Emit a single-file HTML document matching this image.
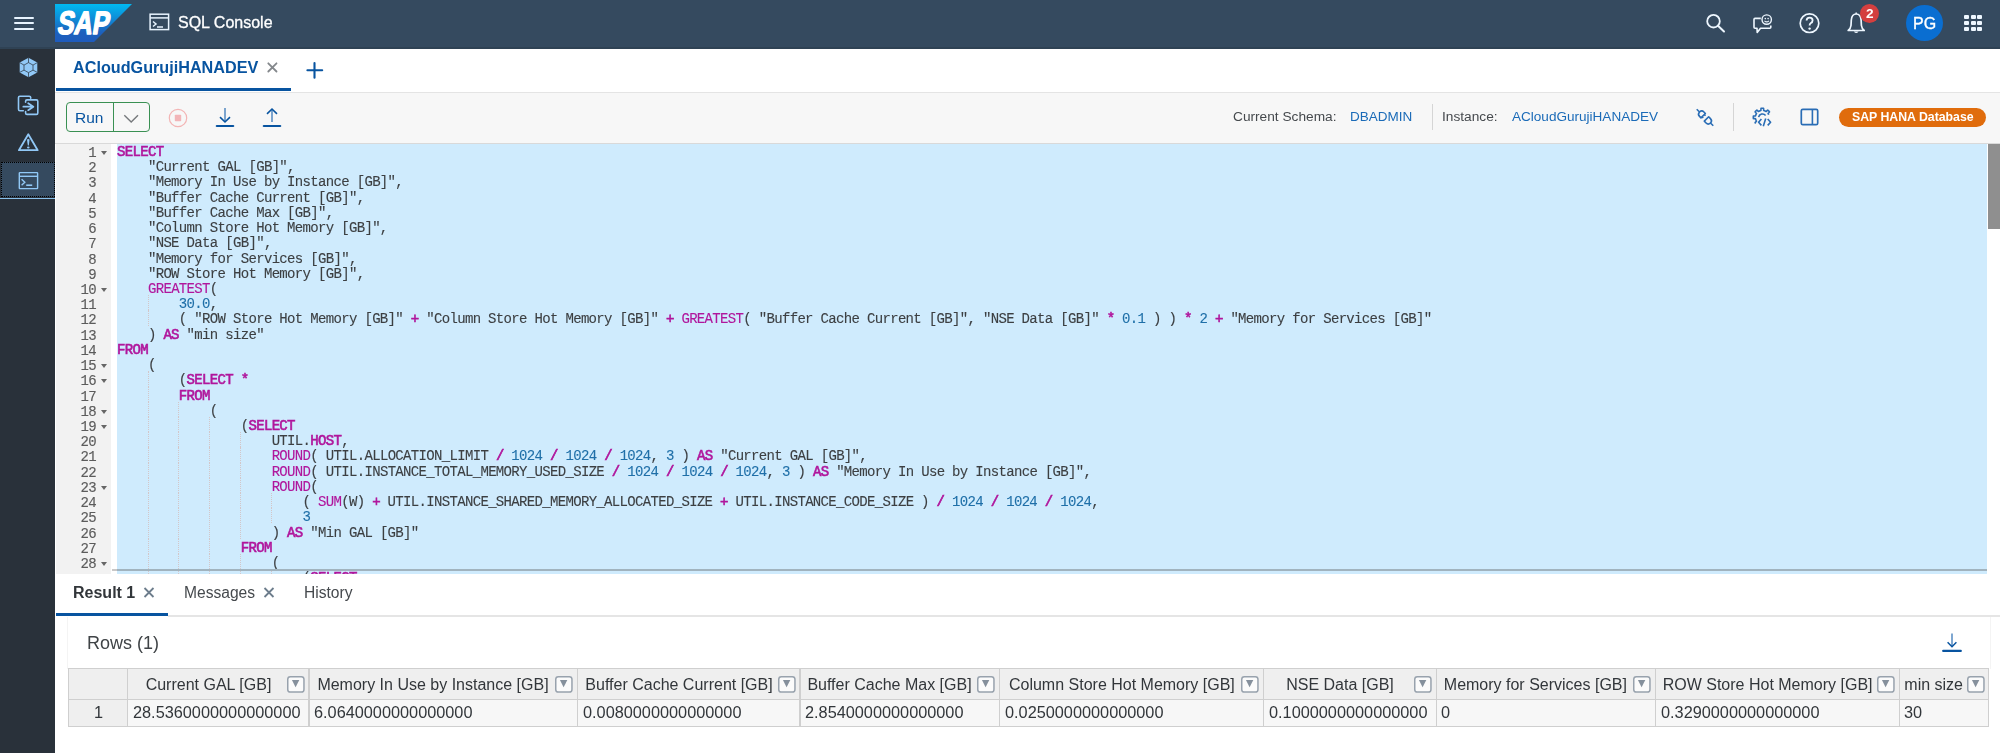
<!DOCTYPE html>
<html><head><meta charset="utf-8"><style>
*{box-sizing:border-box;margin:0;padding:0}
html,body{width:2000px;height:753px;overflow:hidden;background:#fff;font-family:"Liberation Sans",sans-serif;position:relative}
.a{position:absolute}
.t{white-space:pre;will-change:transform}
#code{left:117px;top:144.8px;width:1870px;height:428.7px;overflow:hidden;font-family:"Liberation Mono",monospace;font-size:14px;letter-spacing:-0.67px;color:#3c3f42;white-space:pre;-webkit-text-stroke:0.12px currentColor;will-change:transform}
.cl{position:absolute;left:0;height:15.22px;line-height:15.22px}
#lnum{left:56px;top:145.8px;width:55px;height:426.7px;overflow:hidden;font-family:"Liberation Mono",monospace;font-size:14px;letter-spacing:-0.65px;color:#5c5c5c;-webkit-text-stroke:0.15px currentColor;will-change:transform}
.ln{position:absolute;right:15px;height:15.22px;line-height:15.22px}
.fd{position:absolute;left:45px;width:0;height:0;border-left:3.2px solid transparent;border-right:3.2px solid transparent;border-top:4px solid #666}
.k{color:#b0169c;font-weight:normal;-webkit-text-stroke:0.6px currentColor}
.f{color:#b0169c;font-style:normal}
.n{color:#1f6fa8;font-style:normal}
.ig{position:absolute;width:0;height:15.22px;border-left:1px dotted #d3c6c8}
.fi{width:17.7px;height:16.8px;border:1.5px solid #98a2ad;border-radius:3px;background:#fbfbfb}
.fi:after{content:"";position:absolute;left:3.4px;top:2.8px;border-left:3.8px solid transparent;border-right:3.8px solid transparent;border-top:7px solid #85909c}
.hd{font-size:16px;line-height:16px;color:#32363a;text-align:center;overflow:hidden}
</style></head><body>
<div class="a" style="left:0;top:0;width:2000px;height:49px;background:#354a5f"></div>
<div class="a" style="left:0;top:47px;width:2000px;height:2px;background:#2f4254"></div>
<div class="a" style="left:13.5px;top:16.5px;width:20px;height:2px;background:#e8f4ff;border-radius:1px"></div>
<div class="a" style="left:13.5px;top:22.2px;width:20px;height:2px;background:#e8f4ff;border-radius:1px"></div>
<div class="a" style="left:13.5px;top:27.9px;width:20px;height:2px;background:#e8f4ff;border-radius:1px"></div>
<svg class="a" style="left:55px;top:4px" width="77" height="38" viewBox="0 0 77 38">
<defs><linearGradient id="sg" x1="0" y1="0" x2="0" y2="1"><stop offset="0" stop-color="#00b9f2"/><stop offset="0.75" stop-color="#1d61bd"/><stop offset="1" stop-color="#1e5bbd"/></linearGradient></defs>
<polygon points="0,0 77,0 39,38 0,38" fill="url(#sg)"/>
<text x="6.2" y="30.2" font-family="Liberation Sans" font-weight="bold" font-size="32.5" fill="#fff" stroke="#fff" stroke-width="1.5" stroke-linejoin="round" textLength="52" lengthAdjust="spacingAndGlyphs" transform="skewX(-9)">SAP</text>
</svg>
<svg class="a" style="left:149px;top:13px" width="21" height="18" viewBox="0 0 21 18">
<rect x="1.1" y="1.2" width="18.5" height="15.4" fill="none" stroke="#e8f4ff" stroke-width="1.5"/>
<line x1="1.1" y1="4.9" x2="19.6" y2="4.9" stroke="#e8f4ff" stroke-width="1.5"/>
<polyline points="4,8.5 7,11 4,13.5" fill="none" stroke="#e8f4ff" stroke-width="1.5"/>
<line x1="8" y1="14" x2="14" y2="14" stroke="#e8f4ff" stroke-width="1.5"/>
</svg>
<div class="a t" style="left:178.00px;top:14.85px;font-size:16px;line-height:16px;color:#ffffff;font-weight:400;-webkit-text-stroke:0.3px #fff">SQL Console</div>
<svg class="a" style="left:1703px;top:11px" width="26" height="24" viewBox="0 0 26 24">
<circle cx="10.5" cy="10.2" r="6.3" fill="none" stroke="#eef7ff" stroke-width="1.8"/>
<line x1="15" y1="14.8" x2="21" y2="20.5" stroke="#eef7ff" stroke-width="2" stroke-linecap="round"/>
</svg>
<svg class="a" style="left:1751px;top:12px" width="26" height="24" viewBox="0 0 26 24">
<path d="M9.8 6.4 H4 Q3 6.4 3 7.4 V15.3 Q3 16.3 4 16.3 H6 L6.2 20.5 L9.5 16.3 H18.8 Q19.8 16.3 19.8 15.3 V13.4" fill="none" stroke="#eef7ff" stroke-width="1.6" stroke-linejoin="round"/>
<circle cx="15.7" cy="7.6" r="4.7" fill="none" stroke="#eef7ff" stroke-width="1.4"/>
<path d="M13.5 8.8 Q15.7 11 17.9 8.8" fill="none" stroke="#eef7ff" stroke-width="1.1"/>
<circle cx="14.3" cy="6.6" r="0.8" fill="#eef7ff"/><circle cx="17.1" cy="6.6" r="0.8" fill="#eef7ff"/>
</svg>
<svg class="a" style="left:1798px;top:12px" width="24" height="24" viewBox="0 0 24 24">
<circle cx="11.5" cy="11.2" r="9.3" fill="none" stroke="#eef7ff" stroke-width="1.7"/>
<path d="M8.6 8.6 Q8.6 5.6 11.6 5.6 Q14.6 5.6 14.6 8.4 Q14.6 10.2 12.6 11.2 Q11.6 11.8 11.6 13.4" fill="none" stroke="#eef7ff" stroke-width="1.8"/>
<circle cx="11.6" cy="16.6" r="1.2" fill="#eef7ff"/>
</svg>
<svg class="a" style="left:1845px;top:11px" width="24" height="25" viewBox="0 0 24 25">
<path d="M11.2 3 Q6.8 3 6.3 9 L6 14.5 Q5.6 17.6 3.2 19.5 H19.2 Q16.8 17.6 16.4 14.5 L16.1 9 Q15.6 3 11.2 3 Z" fill="none" stroke="#eef7ff" stroke-width="1.7" stroke-linejoin="round"/>
<path d="M8.8 20.5 Q11.2 23.5 13.6 20.5 Z" fill="#eef7ff"/>
<line x1="11.2" y1="1.5" x2="11.2" y2="3" stroke="#eef7ff" stroke-width="1.5"/>
</svg>
<div class="a" style="left:1860px;top:3.5px;width:19px;height:19px;border-radius:50%;background:#d43f3f"></div>
<div class="a t" style="left:1865.80px;top:6.68px;font-size:13.6px;line-height:13.6px;color:#ffffff;font-weight:700;">2</div>
<div class="a" style="left:1906px;top:4.5px;width:37px;height:36px;border-radius:50%;background:#0a6ed1"></div>
<div class="a t" style="left:1913.30px;top:15.65px;font-size:16px;line-height:16px;color:#ffffff;font-weight:400;-webkit-text-stroke:0.35px #fff">PG</div>
<div class="a" style="left:1964.4px;top:14.8px;width:5px;height:4.3px;border-radius:1px;background:#eef7ff"></div>
<div class="a" style="left:1970.6px;top:14.8px;width:5px;height:4.3px;border-radius:1px;background:#eef7ff"></div>
<div class="a" style="left:1976.8px;top:14.8px;width:5px;height:4.3px;border-radius:1px;background:#eef7ff"></div>
<div class="a" style="left:1964.4px;top:20.8px;width:5px;height:4.3px;border-radius:1px;background:#eef7ff"></div>
<div class="a" style="left:1970.6px;top:20.8px;width:5px;height:4.3px;border-radius:1px;background:#eef7ff"></div>
<div class="a" style="left:1976.8px;top:20.8px;width:5px;height:4.3px;border-radius:1px;background:#eef7ff"></div>
<div class="a" style="left:1964.4px;top:26.8px;width:5px;height:4.3px;border-radius:1px;background:#eef7ff"></div>
<div class="a" style="left:1970.6px;top:26.8px;width:5px;height:4.3px;border-radius:1px;background:#eef7ff"></div>
<div class="a" style="left:1976.8px;top:26.8px;width:5px;height:4.3px;border-radius:1px;background:#eef7ff"></div>
<div class="a" style="left:0;top:49px;width:55px;height:704px;background:#29313a"></div>
<svg class="a" style="left:18px;top:57px" width="21" height="21" viewBox="0 0 21 21">
<polygon points="10.5,0.8 19.3,5.6 19.3,15.4 10.5,20.2 1.7,15.4 1.7,5.6" fill="#91c8f6"/>
<polygon points="10.5,5.6 15,8.1 15,13.1 10.5,15.6 6,13.1 6,8.1" fill="none" stroke="#29313a" stroke-width="0.9" opacity="0.8"/>
<path d="M10.5 0.8 V5.6 M1.7 5.6 L6 8.1 M19.3 5.6 L15 8.1 M1.7 15.4 L6 13.1 M19.3 15.4 L15 13.1 M10.5 15.6 V20.2" fill="none" stroke="#29313a" stroke-width="0.9" opacity="0.8"/>
</svg>
<svg class="a" style="left:17px;top:95px" width="23" height="21" viewBox="0 0 23 21">
<path d="M13.7 3.3 V2.5 Q13.7 1.2 12.2 1.2 H2.9 Q1.5 1.2 1.5 2.5 V14.2 Q1.5 15.7 2.9 15.7 H6.3" fill="none" stroke="#91c8f6" stroke-width="1.6" stroke-linecap="round"/>
<path d="M8.6 7.3 V6.3 Q8.6 4.9 10 4.9 H19.4 Q20.8 4.9 20.8 6.3 V18 Q20.8 19.4 19.4 19.4 H10 Q8.6 19.4 8.6 18 V16.6" fill="none" stroke="#91c8f6" stroke-width="1.6" stroke-linecap="round"/>
<path d="M6.3 11.7 H16.2 M11.2 8.2 L16.4 11.7 L11.2 15.2" fill="none" stroke="#91c8f6" stroke-width="1.7" stroke-linecap="round" stroke-linejoin="round"/>
</svg>
<svg class="a" style="left:17px;top:132px" width="23" height="20" viewBox="0 0 23 20">
<path d="M11.3 2.2 L20.7 18.2 H1.9 Z" fill="none" stroke="#91c8f6" stroke-width="1.8" stroke-linejoin="round"/>
<path d="M10 7.6 Q11.3 6.2 12.6 7.6 L11.8 13.6 H10.8 Z" fill="#91c8f6"/>
<ellipse cx="11.3" cy="15.6" rx="1.3" ry="1" fill="#91c8f6"/>
</svg>
<div class="a" style="left:1px;top:162px;width:54px;height:35px;background:#354a5f;border:1px dotted #000"></div>
<div class="a" style="left:0;top:197.5px;width:55px;height:1.6px;background:#88c0ea"></div>
<svg class="a" style="left:18px;top:171px" width="21" height="19" viewBox="0 0 21 19">
<rect x="1.3" y="1.6" width="18.3" height="16" rx="0.6" fill="none" stroke="#91c8f6" stroke-width="1.4"/>
<line x1="1.3" y1="5.3" x2="19.6" y2="5.3" stroke="#91c8f6" stroke-width="1.4"/>
<polyline points="3.6,8.3 6.8,11.2 3.6,14.2" fill="none" stroke="#91c8f6" stroke-width="1.4"/>
<line x1="8.2" y1="14.2" x2="14.2" y2="14.2" stroke="#91c8f6" stroke-width="1.6"/>
</svg>
<div class="a" style="left:55px;top:49px;width:1945px;height:43px;background:#fff"></div>
<div class="a" style="left:55px;top:91.5px;width:1945px;height:1.5px;background:#e4e4e4"></div>
<div class="a t" style="left:72.50px;top:58.98px;font-size:16.2px;line-height:16.2px;color:#0854a0;font-weight:700;">ACloudGurujiHANADEV</div>
<svg class="a" style="left:266px;top:61px" width="12" height="12" viewBox="0 0 12 12"><path d="M2.3 2.3 L10.5 10.5 M10.5 2.3 L2.3 10.5" stroke="#84888c" stroke-width="1.8" stroke-linecap="round"/></svg>
<div class="a" style="left:56px;top:88.3px;width:235px;height:3.2px;background:#0854a0"></div>
<svg class="a" style="left:305px;top:60.5px" width="19" height="19" viewBox="0 0 19 19"><path d="M9.5 2 V16.8 M2.4 9.3 H17.2" stroke="#0854a0" stroke-width="2.1" stroke-linecap="round"/></svg>
<div class="a" style="left:55px;top:93px;width:1945px;height:50.5px;background:#f7f7f7"></div>
<div class="a" style="left:55px;top:142.5px;width:1945px;height:1.5px;background:#d9d9d9"></div>
<div class="a" style="left:66px;top:102px;width:84px;height:30px;border:1.4px solid #3a9053;border-radius:4px"></div>
<div class="a" style="left:112.5px;top:102px;width:1.4px;height:30px;background:#3a9053"></div>
<div class="a t" style="left:75.00px;top:110.48px;font-size:15.5px;line-height:15.5px;color:#0854a0;font-weight:400;">Run</div>
<svg class="a" style="left:123px;top:113.6px" width="16" height="10" viewBox="0 0 16 10"><polyline points="1.3,1.2 8.2,8 15,1.2" fill="none" stroke="#76797c" stroke-width="1.4"/></svg>
<svg class="a" style="left:168px;top:107.5px" width="20" height="20" viewBox="0 0 20 20"><circle cx="10" cy="10" r="8.7" fill="none" stroke="#f3b5b5" stroke-width="1.2"/><rect x="6.8" y="6.8" width="6.4" height="6.4" rx="0.8" fill="#f2b5b8"/></svg>
<svg class="a" style="left:215px;top:107px" width="20" height="21" viewBox="0 0 20 21"><path d="M10 1 V14.5" fill="none" stroke="#3a78b8" stroke-width="1.3"/><path d="M5 10.2 L10 15 L15 10.2" fill="none" stroke="#0854a0" stroke-width="1.6"/><line x1="1.8" y1="19" x2="18.2" y2="19" stroke="#0854a0" stroke-width="2.2" stroke-linecap="round"/></svg>
<svg class="a" style="left:262px;top:107px" width="20" height="21" viewBox="0 0 20 21"><path d="M10 15 V2" fill="none" stroke="#3a78b8" stroke-width="1.3"/><path d="M5 6.8 L10 2 L15 6.8" fill="none" stroke="#0854a0" stroke-width="1.6"/><line x1="1.8" y1="19" x2="18.2" y2="19" stroke="#0854a0" stroke-width="2.2" stroke-linecap="round"/></svg>
<div class="a t" style="left:1232.50px;top:109.90px;font-size:13.7px;line-height:13.7px;color:#45494d;font-weight:400;">Current Schema:</div>
<div class="a t" style="left:1350.00px;top:110.07px;font-size:13.5px;line-height:13.5px;color:#1b6bb8;font-weight:400;">DBADMIN</div>
<div class="a" style="left:1431.5px;top:104px;width:1px;height:26px;background:#d5d5d5"></div>
<div class="a t" style="left:1442.00px;top:109.90px;font-size:13.7px;line-height:13.7px;color:#45494d;font-weight:400;">Instance:</div>
<div class="a t" style="left:1511.50px;top:110.03px;font-size:13.55px;line-height:13.55px;color:#1b6bb8;font-weight:400;">ACloudGurujiHANADEV</div>
<svg class="a" style="left:1690px;top:103px" width="40" height="30" viewBox="1690 103 40 30">
<g transform="rotate(-45 1705 117.5)" fill="none" stroke="#2a6db5" stroke-width="1.6" stroke-linejoin="round">
<path d="M1705 105.8 V109.8"/>
<path d="M1701.9 114.9 V112.9 Q1701.9 109.8 1705 109.8 Q1708.1 109.8 1708.1 112.9 V114.9 Z"/>
<path d="M1703.4 114.9 V116.6 M1706.6 114.9 V116.6"/>
<path d="M1701.9 119.6 H1708.1 V122.1 Q1708.1 125.2 1705 125.2 Q1701.9 125.2 1701.9 122.1 Z"/>
<path d="M1705 125.2 V129.2"/>
</g></svg>
<div class="a" style="left:1733px;top:103px;width:1.2px;height:28px;background:#d5d5d5"></div>
<svg class="a" style="left:1745px;top:103px" width="40" height="30" viewBox="1745 103 40 30">
<g fill="none" stroke="#2a6db5" stroke-width="1.6" stroke-linejoin="round">
<path d="M1755.72 123.44 L1755.61 123.32 L1755.51 123.20 L1755.41 123.09 L1755.31 122.96 L1755.21 122.84 L1755.11 122.72 L1755.30 122.38 L1755.85 121.82 L1756.42 121.27 L1756.51 121.06 L1756.45 120.96 L1756.39 120.85 L1756.32 120.75 L1756.27 120.65 L1756.21 120.54 L1756.15 120.43 L1756.10 120.32 L1756.05 120.22 L1756.00 120.11 L1755.95 120.00 L1755.90 119.88 L1755.86 119.77 L1755.82 119.66 L1755.78 119.55 L1755.74 119.43 L1755.70 119.32 L1755.67 119.20 L1755.64 119.09 L1755.60 118.97 L1755.58 118.85 L1755.55 118.73 L1755.34 118.65 L1754.55 118.67 L1753.76 118.65 L1753.39 118.55 L1753.37 118.40 L1753.35 118.24 L1753.33 118.08 L1753.32 117.93 L1753.31 117.77 L1753.31 117.61 L1753.30 117.46 L1753.30 117.30 L1753.30 117.14 L1753.31 116.99 L1753.31 116.83 L1753.32 116.67 L1753.33 116.52 L1753.35 116.36 L1753.37 116.20 L1753.39 116.05 L1753.76 115.95 L1754.55 115.93 L1755.34 115.95 L1755.55 115.87 L1755.58 115.75 L1755.60 115.63 L1755.64 115.51 L1755.67 115.40 L1755.70 115.28 L1755.74 115.17 L1755.78 115.05 L1755.82 114.94 L1755.86 114.83 L1755.90 114.72 L1755.95 114.60 L1756.00 114.49 L1756.05 114.38 L1756.10 114.28 L1756.15 114.17 L1756.21 114.06 L1756.27 113.95 L1756.32 113.85 L1756.39 113.75 L1756.45 113.64 L1756.51 113.54 L1756.42 113.33 L1755.85 112.78 L1755.30 112.22 L1755.11 111.88 L1755.21 111.76 L1755.31 111.64 L1755.41 111.51 L1755.51 111.40 L1755.61 111.28 L1755.72 111.16 L1755.83 111.05 L1755.94 110.94 L1756.05 110.83 L1756.16 110.72 L1756.28 110.61 L1756.40 110.51 L1756.51 110.41 L1756.64 110.31 L1756.76 110.21 L1756.88 110.11 L1757.22 110.30 L1757.78 110.85 L1758.33 111.42 L1758.54 111.51 L1758.64 111.45 L1758.75 111.39 L1758.85 111.32 L1758.95 111.27 L1759.06 111.21 L1759.17 111.15 L1759.28 111.10 L1759.38 111.05 L1759.49 111.00 L1759.60 110.95 L1759.72 110.90 L1759.83 110.86 L1759.94 110.82 L1760.05 110.78 L1760.17 110.74 L1760.28 110.70 L1760.40 110.67 L1760.51 110.64 L1760.63 110.60 L1760.75 110.58 L1760.87 110.55 L1760.95 110.34 L1760.93 109.55 L1760.95 108.76 L1761.05 108.39 L1761.20 108.37 L1761.36 108.35 L1761.52 108.33 L1761.67 108.32 L1761.83 108.31 L1761.99 108.31 L1762.14 108.30 L1762.30 108.30 L1762.46 108.30 L1762.61 108.31 L1762.77 108.31 L1762.93 108.32 L1763.08 108.33 L1763.24 108.35 L1763.40 108.37 L1763.55 108.39 L1763.65 108.76 L1763.67 109.55 L1763.65 110.34 L1763.73 110.55 L1763.85 110.58 L1763.97 110.60 L1764.09 110.64 L1764.20 110.67 L1764.32 110.70 L1764.43 110.74 L1764.55 110.78 L1764.66 110.82 L1764.77 110.86 L1764.88 110.90 L1765.00 110.95 L1765.11 111.00 L1765.22 111.05 L1765.32 111.10 L1765.43 111.15 L1765.54 111.21 L1765.65 111.27 L1765.75 111.32 L1765.85 111.39 L1765.96 111.45 L1766.06 111.51 L1766.27 111.42 L1766.82 110.85 L1767.38 110.30 L1767.72 110.11 L1767.84 110.21 L1767.96 110.31 L1768.09 110.41 L1768.20 110.51 L1768.32 110.61 L1768.44 110.72 L1768.55 110.83 L1768.66 110.94 L1768.77 111.05 L1768.88 111.16 L1768.99 111.28 L1769.09 111.40 L1769.19 111.51 L1769.29 111.64 L1769.39 111.76 L1769.49 111.88 L1769.30 112.22 L1768.75 112.78 L1768.18 113.33 L1768.09 113.54 L1768.15 113.64 L1768.21 113.75 L1768.28 113.85 L1768.33 113.95 L1768.39 114.06 L1768.45 114.17 L1768.50 114.28 L1768.55 114.38 L1768.60 114.49 L1768.65 114.60 L1768.70 114.72 "/>
<path d="M1758.6 117.2 A4 4 0 0 1 1765.6 115.4"/>
<path d="M1761.4 119 L1758.6 122.2 L1761.4 125.4 M1767.7 119 L1770.6 122.2 L1767.7 125.4 M1765.7 118.6 L1763.3 126.3"/>
</g></svg>
<svg class="a" style="left:1800px;top:108px" width="19" height="18" viewBox="0 0 19 18"><rect x="1.3" y="1.3" width="16.4" height="15.4" rx="1.5" fill="none" stroke="#2a6db5" stroke-width="1.7"/><line x1="12.4" y1="1.3" x2="12.4" y2="16.7" stroke="#2a6db5" stroke-width="1.6"/></svg>
<div class="a" style="left:1839px;top:107.8px;width:146.5px;height:19.5px;border-radius:10px;background:#e06c0c"></div>
<div class="a t" style="left:1851.50px;top:111.09px;font-size:12.3px;line-height:12.3px;color:#ffffff;font-weight:700;">SAP HANA Database</div>
<div class="a" style="left:55px;top:144px;width:1945px;height:429.5px;background:#fff"></div>
<div class="a" style="left:56px;top:144px;width:55px;height:429.5px;background:#f2f2f2"></div>
<div class="a" style="left:117px;top:144px;width:1870px;height:429.5px;background:#cfebfd"></div>
<div class="a" style="left:1987.5px;top:143.5px;width:12.5px;height:85px;background:#8f8f8f"></div>
<div class="ig" style="left:148px;top:295.20px"></div><div class="ig" style="left:148px;top:310.42px"></div><div class="ig" style="left:148px;top:371.30px"></div><div class="ig" style="left:148px;top:386.52px"></div><div class="ig" style="left:148px;top:401.74px"></div><div class="ig" style="left:178px;top:401.74px"></div><div class="ig" style="left:148px;top:416.96px"></div><div class="ig" style="left:178px;top:416.96px"></div><div class="ig" style="left:209px;top:416.96px"></div><div class="ig" style="left:148px;top:432.18px"></div><div class="ig" style="left:178px;top:432.18px"></div><div class="ig" style="left:209px;top:432.18px"></div><div class="ig" style="left:240px;top:432.18px"></div><div class="ig" style="left:148px;top:447.40px"></div><div class="ig" style="left:178px;top:447.40px"></div><div class="ig" style="left:209px;top:447.40px"></div><div class="ig" style="left:240px;top:447.40px"></div><div class="ig" style="left:148px;top:462.62px"></div><div class="ig" style="left:178px;top:462.62px"></div><div class="ig" style="left:209px;top:462.62px"></div><div class="ig" style="left:240px;top:462.62px"></div><div class="ig" style="left:148px;top:477.84px"></div><div class="ig" style="left:178px;top:477.84px"></div><div class="ig" style="left:209px;top:477.84px"></div><div class="ig" style="left:240px;top:477.84px"></div><div class="ig" style="left:148px;top:493.06px"></div><div class="ig" style="left:178px;top:493.06px"></div><div class="ig" style="left:209px;top:493.06px"></div><div class="ig" style="left:240px;top:493.06px"></div><div class="ig" style="left:271px;top:493.06px"></div><div class="ig" style="left:148px;top:508.28px"></div><div class="ig" style="left:178px;top:508.28px"></div><div class="ig" style="left:209px;top:508.28px"></div><div class="ig" style="left:240px;top:508.28px"></div><div class="ig" style="left:271px;top:508.28px"></div><div class="ig" style="left:148px;top:523.50px"></div><div class="ig" style="left:178px;top:523.50px"></div><div class="ig" style="left:209px;top:523.50px"></div><div class="ig" style="left:240px;top:523.50px"></div><div class="ig" style="left:148px;top:538.72px"></div><div class="ig" style="left:178px;top:538.72px"></div><div class="ig" style="left:209px;top:538.72px"></div><div class="ig" style="left:148px;top:553.94px"></div><div class="ig" style="left:178px;top:553.94px"></div><div class="ig" style="left:209px;top:553.94px"></div><div class="ig" style="left:240px;top:553.94px"></div><div class="ig" style="left:148px;top:569.16px"></div><div class="ig" style="left:178px;top:569.16px"></div><div class="ig" style="left:209px;top:569.16px"></div><div class="ig" style="left:240px;top:569.16px"></div><div class="ig" style="left:271px;top:569.16px"></div>
<div class="a" id="code"><div class="cl" style="top:0.00px"><b class="k">SELECT</b></div><div class="cl" style="top:15.22px">    &quot;Current GAL [GB]&quot;,</div><div class="cl" style="top:30.44px">    &quot;Memory In Use by Instance [GB]&quot;,</div><div class="cl" style="top:45.66px">    &quot;Buffer Cache Current [GB]&quot;,</div><div class="cl" style="top:60.88px">    &quot;Buffer Cache Max [GB]&quot;,</div><div class="cl" style="top:76.10px">    &quot;Column Store Hot Memory [GB]&quot;,</div><div class="cl" style="top:91.32px">    &quot;NSE Data [GB]&quot;,</div><div class="cl" style="top:106.54px">    &quot;Memory for Services [GB]&quot;,</div><div class="cl" style="top:121.76px">    &quot;ROW Store Hot Memory [GB]&quot;,</div><div class="cl" style="top:136.98px">    <i class="f">GREATEST</i>(</div><div class="cl" style="top:152.20px">        <i class="n">30.0</i>,</div><div class="cl" style="top:167.42px">        ( &quot;ROW Store Hot Memory [GB]&quot; <b class="k">+</b> &quot;Column Store Hot Memory [GB]&quot; <b class="k">+</b> <i class="f">GREATEST</i>( &quot;Buffer Cache Current [GB]&quot;, &quot;NSE Data [GB]&quot; <b class="k">*</b> <i class="n">0.1</i> ) ) <b class="k">*</b> <i class="n">2</i> <b class="k">+</b> &quot;Memory for Services [GB]&quot;</div><div class="cl" style="top:182.64px">    ) <b class="k">AS</b> &quot;min size&quot;</div><div class="cl" style="top:197.86px"><b class="k">FROM</b></div><div class="cl" style="top:213.08px">    (</div><div class="cl" style="top:228.30px">        (<b class="k">SELECT</b> <b class="k">*</b></div><div class="cl" style="top:243.52px">        <b class="k">FROM</b></div><div class="cl" style="top:258.74px">            (</div><div class="cl" style="top:273.96px">                (<b class="k">SELECT</b></div><div class="cl" style="top:289.18px">                    UTIL.<b class="k">HOST</b>,</div><div class="cl" style="top:304.40px">                    <i class="f">ROUND</i>( UTIL.ALLOCATION_LIMIT <b class="k">/</b> <i class="n">1024</i> <b class="k">/</b> <i class="n">1024</i> <b class="k">/</b> <i class="n">1024</i>, <i class="n">3</i> ) <b class="k">AS</b> &quot;Current GAL [GB]&quot;,</div><div class="cl" style="top:319.62px">                    <i class="f">ROUND</i>( UTIL.INSTANCE_TOTAL_MEMORY_USED_SIZE <b class="k">/</b> <i class="n">1024</i> <b class="k">/</b> <i class="n">1024</i> <b class="k">/</b> <i class="n">1024</i>, <i class="n">3</i> ) <b class="k">AS</b> &quot;Memory In Use by Instance [GB]&quot;,</div><div class="cl" style="top:334.84px">                    <i class="f">ROUND</i>(</div><div class="cl" style="top:350.06px">                        ( <i class="f">SUM</i>(W) <b class="k">+</b> UTIL.INSTANCE_SHARED_MEMORY_ALLOCATED_SIZE <b class="k">+</b> UTIL.INSTANCE_CODE_SIZE ) <b class="k">/</b> <i class="n">1024</i> <b class="k">/</b> <i class="n">1024</i> <b class="k">/</b> <i class="n">1024</i>,</div><div class="cl" style="top:365.28px">                        <i class="n">3</i></div><div class="cl" style="top:380.50px">                    ) <b class="k">AS</b> &quot;Min GAL [GB]&quot;</div><div class="cl" style="top:395.72px">                <b class="k">FROM</b></div><div class="cl" style="top:410.94px">                    (</div><div class="cl" style="top:426.16px">                        (<b class="k">SELECT</b></div></div>
<div class="a" id="lnum"><div class="ln" style="top:0.00px">1</div><div class="fd" style="top:4.90px"></div><div class="ln" style="top:15.22px">2</div><div class="ln" style="top:30.44px">3</div><div class="ln" style="top:45.66px">4</div><div class="ln" style="top:60.88px">5</div><div class="ln" style="top:76.10px">6</div><div class="ln" style="top:91.32px">7</div><div class="ln" style="top:106.54px">8</div><div class="ln" style="top:121.76px">9</div><div class="ln" style="top:136.98px">10</div><div class="fd" style="top:141.88px"></div><div class="ln" style="top:152.20px">11</div><div class="ln" style="top:167.42px">12</div><div class="ln" style="top:182.64px">13</div><div class="ln" style="top:197.86px">14</div><div class="ln" style="top:213.08px">15</div><div class="fd" style="top:217.98px"></div><div class="ln" style="top:228.30px">16</div><div class="fd" style="top:233.20px"></div><div class="ln" style="top:243.52px">17</div><div class="ln" style="top:258.74px">18</div><div class="fd" style="top:263.64px"></div><div class="ln" style="top:273.96px">19</div><div class="fd" style="top:278.86px"></div><div class="ln" style="top:289.18px">20</div><div class="ln" style="top:304.40px">21</div><div class="ln" style="top:319.62px">22</div><div class="ln" style="top:334.84px">23</div><div class="fd" style="top:339.74px"></div><div class="ln" style="top:350.06px">24</div><div class="ln" style="top:365.28px">25</div><div class="ln" style="top:380.50px">26</div><div class="ln" style="top:395.72px">27</div><div class="ln" style="top:410.94px">28</div><div class="fd" style="top:415.84px"></div><div class="ln" style="top:426.16px">29</div></div>
<div class="a" style="left:111.5px;top:569px;width:1875.5px;height:1.6px;background:#a1b3be"></div>
<div class="a" style="left:111.5px;top:569px;width:5.5px;height:1.6px;background:#c8c8c8"></div>
<div class="a" style="left:55px;top:573.5px;width:1945px;height:180px;background:#fff"></div>
<div class="a t" style="left:72.50px;top:585.15px;font-size:16px;line-height:16px;color:#32363a;font-weight:700;">Result 1</div>
<svg class="a" style="left:143px;top:586.5px" width="12" height="11" viewBox="0 0 12 11"><path d="M1.5 1 L10.5 10 M10.5 1 L1.5 10" stroke="#6d7d8c" stroke-width="1.8"/></svg>
<div class="a t" style="left:183.50px;top:585.49px;font-size:15.6px;line-height:15.6px;color:#45494d;font-weight:400;">Messages</div>
<svg class="a" style="left:263px;top:586.5px" width="12" height="11" viewBox="0 0 12 11"><path d="M1.5 1 L10.5 10 M10.5 1 L1.5 10" stroke="#6d7d8c" stroke-width="1.8"/></svg>
<div class="a t" style="left:303.50px;top:585.49px;font-size:15.6px;line-height:15.6px;color:#45494d;font-weight:400;">History</div>
<div class="a" style="left:168px;top:615px;width:1832px;height:1.5px;background:#e5e5e5"></div>
<div class="a" style="left:56px;top:613px;width:112px;height:3px;background:#0854a0"></div>
<div class="a" style="left:67px;top:616.5px;width:1px;height:52px;background:#f4f4f4"></div>
<div class="a" style="left:1989.5px;top:616.5px;width:1px;height:52px;background:#f4f4f4"></div>
<div class="a t" style="left:86.50px;top:633.56px;font-size:18px;line-height:18px;color:#3f4346;font-weight:400;">Rows (1)</div>
<svg class="a" style="left:1941px;top:632px" width="22" height="22" viewBox="0 0 22 22"><path d="M11 1.5 V14.5" fill="none" stroke="#3a78b8" stroke-width="1.3"/><path d="M6.6 10.3 L11 14.7 L15.4 10.3" fill="none" stroke="#0854a0" stroke-width="1.5"/><line x1="2.2" y1="18.9" x2="19.8" y2="18.9" stroke="#0854a0" stroke-width="2.2" stroke-linecap="round"/></svg>
<div class="a" style="left:68.3px;top:668.5px;width:1920.7px;height:30.799999999999955px;background:#efefef"></div>
<div class="a" style="left:68.3px;top:699.3px;width:1920.7px;height:27.100000000000023px;background:#f7f7f7"></div>
<div class="a" style="left:68.3px;top:699.3px;width:59.2px;height:27.100000000000023px;background:#efefef"></div>
<div class="a" style="left:67.8px;top:668.0px;width:1921.7px;height:58.89999999999998px;border:1.5px solid #cfcfcf"></div>
<div class="a" style="left:68.3px;top:698.5999999999999px;width:1920.7px;height:1.4px;background:#cfcfcf"></div>
<div class="a" style="left:126.8px;top:668.5px;width:1.4px;height:57.89999999999998px;background:#cfcfcf"></div>
<div class="a" style="left:308.3px;top:668.5px;width:1.4px;height:57.89999999999998px;background:#cfcfcf"></div>
<div class="a" style="left:576.8px;top:668.5px;width:1.4px;height:57.89999999999998px;background:#cfcfcf"></div>
<div class="a" style="left:799.3px;top:668.5px;width:1.4px;height:57.89999999999998px;background:#cfcfcf"></div>
<div class="a" style="left:998.8px;top:668.5px;width:1.4px;height:57.89999999999998px;background:#cfcfcf"></div>
<div class="a" style="left:1263.05px;top:668.5px;width:1.4px;height:57.89999999999998px;background:#cfcfcf"></div>
<div class="a" style="left:1435.55px;top:668.5px;width:1.4px;height:57.89999999999998px;background:#cfcfcf"></div>
<div class="a" style="left:1654.8px;top:668.5px;width:1.4px;height:57.89999999999998px;background:#cfcfcf"></div>
<div class="a" style="left:1898.5px;top:668.5px;width:1.4px;height:57.89999999999998px;background:#cfcfcf"></div>
<svg class="a" style="left:286.50px;top:675.9px" width="18" height="17" viewBox="0 0 18 17"><rect x="0.75" y="0.75" width="16.2" height="15.3" rx="2.6" fill="#fbfbfb" stroke="#98a2ad" stroke-width="1.5"/><polygon points="4.9,4.1 12.3,4.1 8.6,11.3" fill="#85909c"/></svg>
<div class="a t hd" style="left:132.50px;top:676.65px;width:151.00px">Current GAL [GB]</div>
<div class="a t" style="left:132.50px;top:703.80px;font-size:16.3px;line-height:16.3px;color:#32363a;font-weight:400;">28.5360000000000000</div>
<svg class="a" style="left:555.00px;top:675.9px" width="18" height="17" viewBox="0 0 18 17"><rect x="0.75" y="0.75" width="16.2" height="15.3" rx="2.6" fill="#fbfbfb" stroke="#98a2ad" stroke-width="1.5"/><polygon points="4.9,4.1 12.3,4.1 8.6,11.3" fill="#85909c"/></svg>
<div class="a t hd" style="left:314.00px;top:676.65px;width:238.00px">Memory In Use by Instance [GB]</div>
<div class="a t" style="left:314.00px;top:703.80px;font-size:16.3px;line-height:16.3px;color:#32363a;font-weight:400;">6.0640000000000000</div>
<svg class="a" style="left:777.50px;top:675.9px" width="18" height="17" viewBox="0 0 18 17"><rect x="0.75" y="0.75" width="16.2" height="15.3" rx="2.6" fill="#fbfbfb" stroke="#98a2ad" stroke-width="1.5"/><polygon points="4.9,4.1 12.3,4.1 8.6,11.3" fill="#85909c"/></svg>
<div class="a t hd" style="left:582.50px;top:676.65px;width:192.00px">Buffer Cache Current [GB]</div>
<div class="a t" style="left:582.50px;top:703.80px;font-size:16.3px;line-height:16.3px;color:#32363a;font-weight:400;">0.0080000000000000</div>
<svg class="a" style="left:977.00px;top:675.9px" width="18" height="17" viewBox="0 0 18 17"><rect x="0.75" y="0.75" width="16.2" height="15.3" rx="2.6" fill="#fbfbfb" stroke="#98a2ad" stroke-width="1.5"/><polygon points="4.9,4.1 12.3,4.1 8.6,11.3" fill="#85909c"/></svg>
<div class="a t hd" style="left:805.00px;top:676.65px;width:169.00px">Buffer Cache Max [GB]</div>
<div class="a t" style="left:805.00px;top:703.80px;font-size:16.3px;line-height:16.3px;color:#32363a;font-weight:400;">2.8540000000000000</div>
<svg class="a" style="left:1241.25px;top:675.9px" width="18" height="17" viewBox="0 0 18 17"><rect x="0.75" y="0.75" width="16.2" height="15.3" rx="2.6" fill="#fbfbfb" stroke="#98a2ad" stroke-width="1.5"/><polygon points="4.9,4.1 12.3,4.1 8.6,11.3" fill="#85909c"/></svg>
<div class="a t hd" style="left:1004.50px;top:676.65px;width:233.75px">Column Store Hot Memory [GB]</div>
<div class="a t" style="left:1004.50px;top:703.80px;font-size:16.3px;line-height:16.3px;color:#32363a;font-weight:400;">0.0250000000000000</div>
<svg class="a" style="left:1413.75px;top:675.9px" width="18" height="17" viewBox="0 0 18 17"><rect x="0.75" y="0.75" width="16.2" height="15.3" rx="2.6" fill="#fbfbfb" stroke="#98a2ad" stroke-width="1.5"/><polygon points="4.9,4.1 12.3,4.1 8.6,11.3" fill="#85909c"/></svg>
<div class="a t hd" style="left:1268.75px;top:676.65px;width:142.00px">NSE Data [GB]</div>
<div class="a t" style="left:1268.75px;top:703.80px;font-size:16.3px;line-height:16.3px;color:#32363a;font-weight:400;">0.1000000000000000</div>
<svg class="a" style="left:1633.00px;top:675.9px" width="18" height="17" viewBox="0 0 18 17"><rect x="0.75" y="0.75" width="16.2" height="15.3" rx="2.6" fill="#fbfbfb" stroke="#98a2ad" stroke-width="1.5"/><polygon points="4.9,4.1 12.3,4.1 8.6,11.3" fill="#85909c"/></svg>
<div class="a t hd" style="left:1441.25px;top:676.65px;width:188.75px">Memory for Services [GB]</div>
<div class="a t" style="left:1441.25px;top:703.80px;font-size:16.3px;line-height:16.3px;color:#32363a;font-weight:400;">0</div>
<svg class="a" style="left:1876.70px;top:675.9px" width="18" height="17" viewBox="0 0 18 17"><rect x="0.75" y="0.75" width="16.2" height="15.3" rx="2.6" fill="#fbfbfb" stroke="#98a2ad" stroke-width="1.5"/><polygon points="4.9,4.1 12.3,4.1 8.6,11.3" fill="#85909c"/></svg>
<div class="a t hd" style="left:1660.50px;top:676.65px;width:213.20px">ROW Store Hot Memory [GB]</div>
<div class="a t" style="left:1660.50px;top:703.80px;font-size:16.3px;line-height:16.3px;color:#32363a;font-weight:400;">0.3290000000000000</div>
<svg class="a" style="left:1966.50px;top:675.9px" width="18" height="17" viewBox="0 0 18 17"><rect x="0.75" y="0.75" width="16.2" height="15.3" rx="2.6" fill="#fbfbfb" stroke="#98a2ad" stroke-width="1.5"/><polygon points="4.9,4.1 12.3,4.1 8.6,11.3" fill="#85909c"/></svg>
<div class="a t hd" style="left:1904.20px;top:676.65px;width:59.30px">min size</div>
<div class="a t" style="left:1904.20px;top:703.80px;font-size:16.3px;line-height:16.3px;color:#32363a;font-weight:400;">30</div>
<div class="a t" style="left:93.50px;top:703.80px;font-size:16.3px;line-height:16.3px;color:#32363a;font-weight:400;">1</div>
</body></html>
